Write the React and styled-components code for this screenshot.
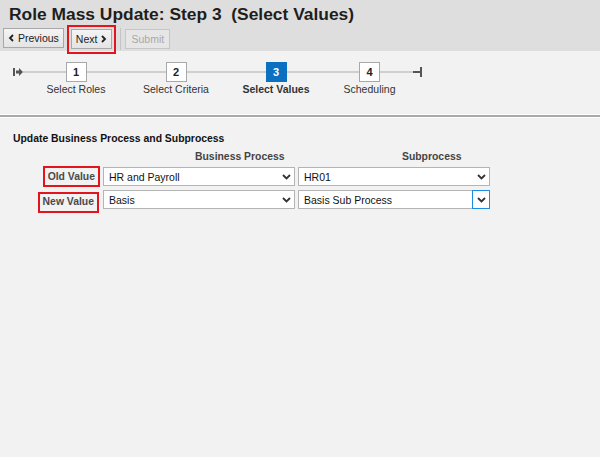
import React from "react";
import styled, { createGlobalStyle, css } from "styled-components";

const Global = createGlobalStyle`
  html, body { margin: 0; padding: 0; background: #f2f2f2; }
  body { font-family: "Liberation Sans", Arial, sans-serif; color: #222; }
  * { box-sizing: border-box; }
`;

const Page = styled.div`
  width: 600px;
  height: 457px;
  background: #f2f2f2;
  overflow: hidden;
`;

const Header = styled.header`
  background: #dedede;
  height: 51px;
  padding: 4px 0 0 9px;
`;

const Title = styled.h1`
  margin: 0;
  font-size: 17.4px;
  font-weight: bold;
  color: #1e1e1e;
  white-space: pre;
  line-height: 20px;
`;

const Toolbar = styled.div`
  display: flex;
  align-items: flex-start;
  margin: 1px 0 0 -6px;
  position: relative;
`;

const Button = styled.button`
  font-family: "Liberation Sans", Arial, sans-serif;
  font-size: 10.5px;
  height: 20px;
  padding: 0 ${(p) => p.$px || 4}px;
  margin-top: ${(p) => p.$mt || 0}px;
  display: flex;
  align-items: center;
  gap: 4px;
  border: 1px solid #a8a8a8;
  background: linear-gradient(#f4f4f4, #e4e4e4);
  color: #222;
  ${(p) =>
    p.disabled &&
    css`
      color: #a8a8a8;
      border-color: #c6c6c6;
      background: #e6e6e6;
    `}
`;

const Highlight = styled.div`
  border: 2px solid #e2151d;
  padding: 2px 2px 3px 2px;
  display: flex;
  margin-left: 3px;
`;

const Divider = styled.span`
  width: 1px;
  height: 22px;
  margin: 3px 4px 0 4px;
  background: #c4c4c4;
`;

const StepArea = styled.div`
  height: 63px;
  padding: 11px 0 0 13px;
  display: flex;
  align-items: flex-start;
`;

const Step = styled.div`
  position: relative;
  width: ${(p) => p.$w}px;
  display: flex;
  flex-direction: column;
  align-items: center;
  &::before {
    content: "";
    position: absolute;
    left: 0;
    right: 0;
    top: 9px;
    height: 2px;
    background: #cfcfcf;
  }
`;

const StepBox = styled.div`
  position: relative;
  width: 21px;
  height: 20px;
  display: flex;
  align-items: center;
  justify-content: center;
  font-size: 11px;
  font-weight: bold;
  background: ${(p) => (p.$active ? "#0b70bf" : "#fff")};
  color: ${(p) => (p.$active ? "#fff" : "#222")};
  border: 1px solid ${(p) => (p.$active ? "#0b70bf" : "#a8a8a8")};
`;

const StepLabel = styled.div`
  margin-top: 1px;
  font-size: 10.5px;
  white-space: nowrap;
  color: #333;
  font-weight: ${(p) => (p.$active ? "bold" : "normal")};
`;

const Cap = styled.svg`
  flex: none;
  display: block;
`;

const Separator = styled.div`
  height: 4px;
  border-top: 1px solid #fff;
  border-bottom: 1px solid #fff;
  background: #a9a9a9;
`;

const Section = styled.section`
  padding: 15px 0 0 13px;
`;

const SectionTitle = styled.h2`
  margin: 0;
  font-size: 10.4px;
  font-weight: bold;
  color: #111;
`;

const Grid = styled.div`
  display: grid;
  grid-template-columns: 87px 192px 192px;
  column-gap: 3px;
  row-gap: 4px;
  margin-top: 6px;
`;

const ColHead = styled.div`
  font-size: 10.4px;
  font-weight: bold;
  color: #444;
  padding: 1px 0 0 ${(p) => p.$pl}px;
  height: 13px;
  line-height: 12px;
`;

const LabelCell = styled.div`
  display: flex;
  justify-content: flex-end;
  align-items: flex-start;
`;

const FieldLabel = styled.div`
  font-size: 10.4px;
  line-height: 13px;
  font-weight: bold;
  color: #4a4a4a;
  border: 2px solid #e2151d;
  padding: ${(p) => p.$pad};
  margin: ${(p) => p.$m};
  white-space: nowrap;
`;

const Select = styled.div`
  height: 19px;
  background: #fff;
  border: 1px solid #b4b4b4;
  display: flex;
  align-items: stretch;
  font-size: 10.5px;
  color: #111;
`;

const SelectText = styled.div`
  flex: 1;
  display: flex;
  align-items: center;
  padding-left: 5px;
`;

const Chevron = styled.div`
  width: 18px;
  display: flex;
  align-items: center;
  justify-content: center;
  margin: -1px -1px -1px 0;
  border: 1px solid ${(p) => (p.$focus ? "#1c8de0" : "transparent")};
`;

const Arrow = () => (
  <svg width="9" height="6" viewBox="0 0 9 6">
    <path d="M1 1 L4.5 4.5 L8 1" fill="none" stroke="#333" strokeWidth="1.8" />
  </svg>
);

const Dropdown = ({ value, focus }) => (
  <Select>
    <SelectText>{value}</SelectText>
    <Chevron $focus={focus}>
      <Arrow />
    </Chevron>
  </Select>
);

const steps = [
  { n: 1, label: "Select Roles", w: 100 },
  { n: 2, label: "Select Criteria", w: 100 },
  { n: 3, label: "Select Values", w: 100, active: true },
  { n: 4, label: "Scheduling", w: 87 },
];

export default function App() {
  return (
    <Page>
      <Global />
      <Header>
        <Title>Role Mass Update: Step 3  (Select Values)</Title>
        <Toolbar>
          <Button $mt={3}>
            <svg width="6" height="8" viewBox="0 0 6 8">
              <path d="M5 1 L2 4 L5 7" fill="none" stroke="#222" strokeWidth="1.8" />
            </svg>
            Previous
          </Button>
          <Highlight>
            <Button>
              Next
              <svg width="6" height="8" viewBox="0 0 6 8">
                <path d="M1 1 L4 4 L1 7" fill="none" stroke="#222" strokeWidth="1.8" />
              </svg>
            </Button>
          </Highlight>
          <Divider />
          <Button disabled $mt={4} $px={5}>
            Submit
          </Button>
        </Toolbar>
      </Header>
      <StepArea>
        <Cap width="13" height="20" viewBox="0 0 13 20">
          <rect x="0" y="6" width="2" height="8" fill="#555" />
          <path d="M3 8.5 H6 V6 L10 10 L6 14 V11.5 H3 Z" fill="#555" />
          <rect x="10" y="9" width="3" height="2" fill="#cfcfcf" />
        </Cap>
        {steps.map((s) => (
          <Step key={s.n} $w={s.w}>
            <StepBox $active={s.active}>{s.n}</StepBox>
            <StepLabel $active={s.active}>{s.label}</StepLabel>
          </Step>
        ))}
        <Cap width="10" height="20" viewBox="0 0 10 20">
          <rect x="0" y="9" width="8" height="2" fill="#555" />
          <rect x="7" y="5" width="2" height="10" fill="#555" />
        </Cap>
      </StepArea>
      <Separator />
      <Section>
        <SectionTitle>Update Business Process and Subprocess</SectionTitle>
        <Grid>
          <div />
          <ColHead $pl={92}>Business Process</ColHead>
          <ColHead $pl={104}>Subprocess</ColHead>

          <LabelCell>
            <FieldLabel $pad="2px 3px" $m="-1px 0 -1px 0">Old Value</FieldLabel>
          </LabelCell>
          <Dropdown value="HR and Payroll" />
          <Dropdown value="HR01" />

          <LabelCell>
            <FieldLabel $pad="1px 3px 3px 3px" $m="2px 1px -4px 0">New Value</FieldLabel>
          </LabelCell>
          <Dropdown value="Basis" />
          <Dropdown value="Basis Sub Process" focus />
        </Grid>
      </Section>
    </Page>
  );
}
